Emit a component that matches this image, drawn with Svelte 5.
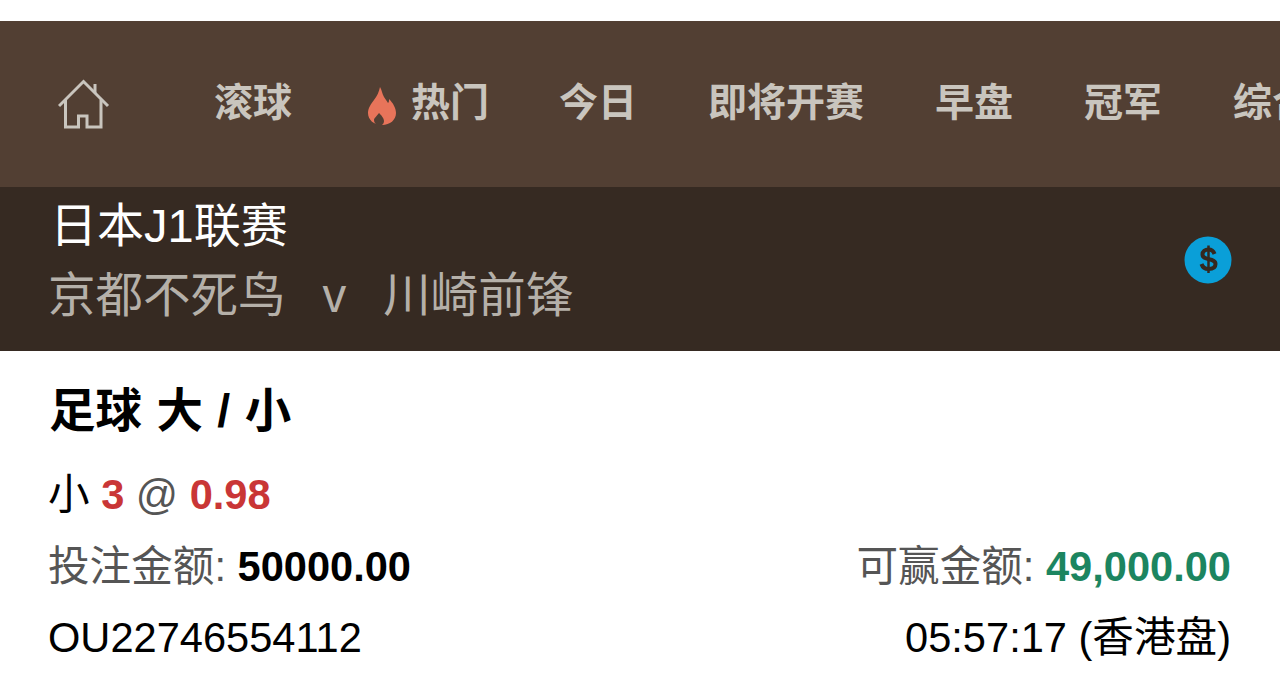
<script>
  const tabs = ['滚球', '热门', '今日', '即将开赛', '早盘', '冠军', '综合'];
</script>

<style>
  :global(body) {
    margin: 0;
    background: #fff;
    overflow: hidden;
  }

  .page {
    height: 679px;
    overflow: hidden;
    padding-top: 21px;
    box-sizing: border-box;
    font-family: "Liberation Sans", "Noto Sans CJK SC", sans-serif;
  }

  .nav {
    display: flex;
    align-items: center;
    height: 166px;
    background: #523f33;
    white-space: nowrap;
    overflow: hidden;
  }

  .home {
    flex: none;
    width: 52px;
    height: 50px;
    margin: 0 104px 0 58px;
  }

  .tab {
    flex: none;
    display: flex;
    align-items: center;
    margin-right: 71px;
    padding-bottom: 2px;
    font-size: 39px;
    font-weight: 700;
    line-height: 44px;
    color: #c9c5be;
  }

  .hot {
    margin-right: 70px;
  }

  .flame {
    width: 28px;
    height: 38px;
    margin-left: 5px;
    margin-right: 15px;
    margin-top: 6px;
  }

  .match {
    display: flex;
    align-items: center;
    justify-content: space-between;
    height: 164px;
    padding: 0 48px;
    background: #362a22;
    box-sizing: border-box;
  }

  .names {
    margin-top: -16px;
  }

  .league {
    font-size: 47px;
    line-height: 70px;
    color: #fff;
    margin-left: 2px;
  }

  .teams {
    display: flex;
    font-size: 47.500px;
    line-height: 70px;
    color: #b5b0a9;
  }

  .vs {
    margin: 0 37px;
  }

  .coin {
    width: 48px;
    height: 48px;
    margin-top: -18px;
  }

  .bet {
    padding: 29px 49px 0 48px;
    font-size: 41.600px;
    line-height: 71px;
    color: #000;
  }

  .title {
    font-size: 46.500px;
    font-weight: 700;
    line-height: 62px;
    word-spacing: 1.500px;
    margin-bottom: 17px;
    margin-left: 1px;
  }

  .pick {
    margin-bottom: 1px;
  }

  .row {
    display: flex;
    justify-content: space-between;
  }

  .odds {
    color: #c93636;
    font-weight: 700;
  }

  .at, .label {
    color: #555;
  }

  .amount {
    font-weight: 700;
  }

  .win {
    font-weight: 700;
    color: #1c8560;
  }
</style>

<div class="page">
  <div class="nav">
    <svg class="home" viewBox="0 0 52 50" fill="none" stroke="#c9c5be" stroke-width="3">
      <path d="M1 27 L25.500 2.500 L50 27" />
      <path d="M37 5 V14" />
      <path d="M7.500 20.500 V48 H20.500 V37 H29 V48 H43 V20.500" />
    </svg>
    {#each tabs as tab}
      <div class="tab" class:hot={tab === '热门'}>
        {#if tab === '热门'}
          <svg class="flame" viewBox="0 0 28 38">
            <path fill="#e8745a" d="M12 0 C14 3 14 7 16 10 C18 13 19 14 20 16 C21 15 21 14 21 12 C25 16 28 21 28 26 C28 33 22 38 14 38 C6 38 0 33 0 26 C0 21 3 17 6 13 C9 9 11 5 12 0 Z" />
            <path fill="#523f33" d="M11 26 C13 28 16 31 16 34 C16 36 15 37 14 38 L9 38 C8 37 6 36 6 33 C6 31 9 29 11 26 Z" />
          </svg>
        {/if}
        {tab}
      </div>
    {/each}
  </div>

  <div class="match">
    <div class="names">
      <div class="league">日本J1联赛</div>
      <div class="teams"><span>京都不死鸟</span><span class="vs">v</span><span>川崎前锋</span></div>
    </div>
    <svg class="coin" viewBox="0 0 48 48">
      <circle cx="24" cy="24" r="23.500" fill="#0a9fd8" />
      <path fill="none" stroke="#35281f" stroke-width="4" d="M30.500 18 C29.500 15 27.500 13.500 24.500 13.500 C21 13.500 18.500 15.500 18.500 18.500 C18.500 25 31.500 21.500 31.500 28 C31.500 31.500 28.500 33 24.500 33 C21 33 18.500 31 17.500 28" />
      <path stroke="#35281f" stroke-width="2.500" d="M24.500 9.500 V37" />
    </svg>
  </div>

  <div class="bet">
    <div class="title">足球 大 / 小</div>
    <div class="pick">小 <span class="odds">3</span> <span class="at">@</span> <span class="odds">0.98</span></div>
    <div class="row">
      <div><span class="label">投注金额:</span> <span class="amount">50000.00</span></div>
      <div><span class="label">可赢金额:</span> <span class="win">49,000.00</span></div>
    </div>
    <div class="row">
      <div>OU22746554112</div>
      <div>05:57:17 (香港盘)</div>
    </div>
  </div>
</div>
